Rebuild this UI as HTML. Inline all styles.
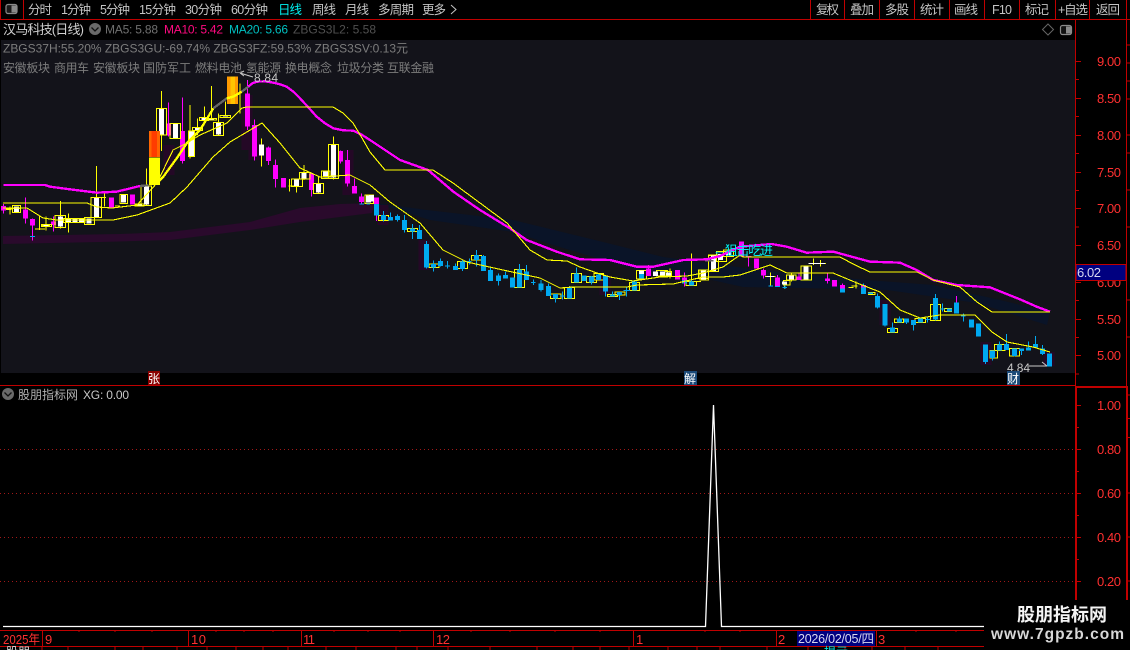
<!DOCTYPE html>
<html><head><meta charset="utf-8"><style>
html,body{margin:0;padding:0;background:#000;width:1130px;height:650px;overflow:hidden}
svg{display:block}
text{font-family:"Liberation Sans","WenQuanYi Zen Hei","Noto Sans CJK SC",sans-serif;font-size:12px}
.t{fill:#c4c4c4;font-size:12.5px}
.g{fill:#7c7c7c}
.a{fill:#ff3030;font-size:13px}
.d{fill:#ff3030;font-size:13px}
</style></head><body>
<svg width="1130" height="650" viewBox="0 0 1130 650" xmlns="http://www.w3.org/2000/svg">
<rect width="1130" height="650" fill="#000"/>
<rect x="1" y="40" width="1074" height="333" fill="#13131a"/>

<!-- bands -->
<path d="M3 236 L120 234 L170 232 L250 222 L300 208 L340 204 L375 203 L372 213 L340 217 L300 222 L250 230 L170 240 L100 242 L3 244Z" fill="#2a0a2c"/>
<path d="M375 203 L427 210 L513 220 L603 242 L663 257 L760 270 L867 280 L933 285 L1000 300 L1050 312 L1047 325 L977 303 L887 290 L800 288 L743 287 L703 278 L637 270 L553 245 L513 232 L430 220Z" fill="#0a1428"/>
<!-- halos -->
<path d="M247 95V150 M254 125V160 M348 150V195 M169 145V175 M424 240V270 M383 205V225 M1049 352V366 M986 342V365 M885 300V325 M605 275V295" stroke="#240826" stroke-width="11" fill="none"/>

<!-- GROUP Z3 -->
<g transform="scale(.33333) translate(0,240)" fill="none" shape-rendering="crispEdges">
<path stroke="#ff0" stroke-width="3" d="M30 380V403M118 410V450M138 410V452M182 363V445M205 400V458M290 258V413M313 335V380M440 265V378M484 33V213M570 75V235M592 115V165M613 80V125M634 18V120M655 100V166M677 65V110M720 10V100M784 175V260M868 297V335M890 295V338M912 255V300M955 290V340M1000 170V298M10 386H60M105 447H135M125 437H150M300 352H318M345 378H360M865 318H885M12 388H35"/>
<path stroke="#f0f" stroke-width="3" d="M10 372V400M76 352V430M97 415V482M160 410V455M506 68V170M548 52V250M742 0V150M763 118V242M805 200V255M826 238V323M934 278V350M1021 212V250M1042 210V320M1063 295V340M1085 340V370"/>
<path stroke="#f0f" stroke-width="15" d="M10 378V392M76 388V416M97 417V437M160 425V435M334 352V382M397 343V373M506 130V167M548 153V243M742 40V140M763 135V230M805 203V243M826 255V297M850 294V323M934 280V330M1021 213V245M1042 240V310M1063 318V340M1085 350V366"/>
<path stroke="#ff0" stroke-width="3" d="M38 377H62V398H38ZM125 433H155V440H125ZM165 407H197V442H165ZM190 415H220V428H190ZM205 415H240V428H205ZM225 415H255V428H225ZM253 413H283V433H253ZM273 352H305V413H273ZM360 343H382V370H360ZM405 372H432V378H405ZM423 318H455V376H423ZM470 85H500V165H470ZM510 130H542V176H510ZM565 153H583V230H565ZM578 142H608V152H578ZM598 112H625V122H598ZM620 115H650V120H620ZM640 127H670V166H640ZM660 106H692V112H660ZM875 297H908V320H875ZM898 277H930V297H898ZM940 310H970V340H940ZM965 273H990V295H965ZM985 193H1015V295H985ZM1095 345H1120V370H1095Z"/>
<path stroke="#fff" stroke-width="15" d="M50 380V396M138 435V438M182 410V440M205 417V426M225 417V426M245 417V426M267 415V431M290 354V411M371 345V368M418 374V377M440 320V374M484 87V163M527 132V174M574 155V228M592 144V150M612 114V120M635 117V119M655 129V164M677 108V110M784 194V226M890 299V318M912 279V295M955 312V338M976 275V293M1000 195V293M1105 347V368"/>
<path stroke="#ff0" stroke-width="33" d="M463 232V315"/>
<path stroke="#f60" stroke-width="33" d="M463 153V231"/>
<path stroke="#ff3c00" stroke-width="17" d="M463 153V231"/>
<path stroke="#ff9a00" stroke-width="33" d="M698 -10V72"/>
<path stroke="#ffc400" stroke-width="13" d="M698 -10V72"/>
<path stroke="#00a8f0" stroke-width="3" d="M90 469H105M1078 372H1092M1100 372H1110"/>
</g>

<!-- GROUP Z4 -->
<g transform="scale(.33333) translate(1110,510)" fill="none" shape-rendering="crispEdges">
<path stroke="#ff0" stroke-width="3" d="M965 250V335M25 137H55V152H25ZM113 175H143V185H113ZM177 282H207V293H177ZM262 275H292V295H262ZM305 257H335V270H305ZM433 298H463V353H433ZM541 372H573V385H541ZM583 352H613V385H583ZM604 310H634V338H604ZM649 320H680V338H649ZM672 310H700V330H672ZM712 373H742V380H712ZM735 366H765V375H735ZM778 337H808V362H778ZM800 302H830V327H800ZM860 302H893V318H860ZM885 305H905V318H885ZM948 335H980V347H948ZM985 300H1015V325H985ZM1015 257H1045V305H1015ZM970 335H993M900 295V325"/>
<path stroke="#00a8f0" stroke-width="3" d="M40 123V155M62 127V152M83 133V155M104 135V188M127 162V207M148 165V207M170 213V295M190 272V305M212 265V290M233 273V295M225 288H240M256 280V300M277 270V303M298 265V283M290 274H305M320 240V290M341 255V303M362 290V333M385 310V347M406 305V325M448 282V353M470 285V330M490 328V345M483 338H497M513 330V365M535 340V378M556 372V398M577 365V388M570 378H585M598 348V385M619 292V338M642 316V333M664 318V343M685 310V330M706 318V380M727 365V380M748 366V390M770 350V380M760 362H780M793 330V362M814 312V325M965 330V347"/>
<path stroke="#00a8f0" stroke-width="15" d="M20 102V137M40 135V150M62 141V152M83 138V150M104 150V180M127 175V185M148 180V207M170 222V293M190 282V293M212 273V288M256 288V300M277 275V297M320 255V270M341 258V303M362 300V333M385 316V333M406 315V325M427 323V353M448 298V353M470 305V330M513 340V360M535 348V378M556 372V385M598 352V385M619 310V338M642 316V333M664 320V338M685 313V330M706 318V365M727 373V380M748 366V375M793 335V362M814 312V325M943 330V340M965 335V347"/>
<path stroke="#f0f" stroke-width="15" d="M20 82V102M835 296V318M922 300V328M943 322V330"/>
<path stroke="#f0f" stroke-width="3" d="M20 137V153M835 285V318M943 308V350"/>
<path stroke="#fff" stroke-width="15" d="M5 75V95M814 302V312M857 305V318M878 304V316M895 307V316M1000 302V323M1030 259V303"/>
<path stroke="#666" stroke-width="5" d="M1005 272H1030"/>
</g>

<!-- GROUP Z5 -->
<g transform="scale(.33333) translate(2100,690)" fill="none" shape-rendering="crispEdges">
<path stroke="#ff0" stroke-width="3" d="M0 120H25V150H0ZM25 75H55V125H25ZM50 65H80V95H50ZM70 60H100V80H70ZM195 140H227M211 128V168M250 152H270V165H250ZM254 165V175M260 135H288V150H260ZM275 130V155M303 108H335V150H303ZM325 100H355M340 85V105M345 100H378M361 90V110M445 172H460M455 168H472M468 155V175M505 188H525V193H505ZM562 295H592V308H562ZM583 267H610V278H583ZM645 265H677V278H645ZM691 223H721V272H691ZM733 235H755V245H733ZM870 362H893V384H870ZM883 343H915V362H883ZM928 355H958V378H928Z"/>
<path stroke="#fff" stroke-width="15" d="M10 122V148M40 77V123M62 72V90M85 65V75M254 154V163M275 137V148M318 110V148M340 100V102M361 99V101"/>
<path stroke="#fff" stroke-width="3" d="M200 140H222M325 100H375"/>
<path stroke="#666" stroke-width="5" d="M15 92H40"/>
<path stroke="#f0f" stroke-width="15" d="M125 35V80M170 85V115M190 120V137M232 143V170M297 140V150M382 145V153M403 150V170M427 165V175M490 165V172"/>
<path stroke="#f0f" stroke-width="3" d="M146 80V110M138 80H154M190 115V145M232 135V170M297 130V150M382 130V160M427 160V175M769 198V217"/>
<path stroke="#00a8f0" stroke-width="15" d="M427 175V188M490 172V192M512 188V192M532 198V232M555 222V287M577 293V308M598 265V278M620 265V278M640 270V285M662 265V278M706 204V268M748 235V245M769 217V250M815 268V293M835 280V320M856 343V396M878 362V384M898 343V362M919 342V360M943 355V378M965 355V363M985 352V362M1006 342V353M1027 355V372M1048 370V410"/>
<path stroke="#00a8f0" stroke-width="3" d="M490 160V192M532 190V235M555 222V290M577 278V308M598 260V278M620 265V282M640 270V302M683 260V278M677 268H691M706 192V272M727 220V245M720 237H735M769 217V250M790 250V275M783 258H797M815 268V293M856 343V402M878 362V392M898 335V362M919 312V360M943 355V380M965 355V375M985 335V362M1006 318V353M1027 345V375M205 168H219M225 170H240M247 172H261M255 165V177"/>
</g>

<!-- MA lines -->
<g fill="none" stroke-linejoin="round" shape-rendering="crispEdges">
<g transform="scale(.33333)">
<path stroke="#f0f" stroke-width="7" d="M10 555H135L150 560L210 568L290 578L350 575L420 558"/>
<path stroke="#666" stroke-width="7" d="M420 558L445 556M640 325L680 295M725 275L745 260"/>
<path stroke="#ff0" stroke-width="7" d="M470 550L490 530L530 475L560 430L600 390L640 325M680 295L700 290L725 275"/>
<path stroke="#f0f" stroke-width="7" d="M745 260L757 250L770 245L795 244L820 248L840 253L860 260L880 275L900 295L925 322L950 350L975 370L1000 385L1030 391L1060 392L1085 404L1110 420L1155 450L1200 480L1284 510L1360 575L1440 630L1530 685L1580 720L1670 755L1740 778L1830 780L1910 800L1960 800L2050 780L2120 778L2160 768L2220 740L2315 732L2360 740L2420 758L2500 755L2610 785L2700 788L2750 810L2800 840L2870 855L2970 862L3060 898L3110 920L3150 935"/>
</g>
<g stroke="#ff0" stroke-width="1.1">
<path d="M3 203H87L97 207L112 208L137 205L157 183L173 150L187 143L200 135L227 123L242 108L247 107H333L343 113L353 123L362 138L370 152L385 170H433L453 183L480 203L507 223L530 250L547 260L567 261L580 267L597 273L610 277L633 281L660 277L687 276L703 273L723 267L740 255L743 257H840L855 265L870 272H917L933 280L960 287L977 302L992 312H1050"/>
<path d="M3 208H27L43 218L57 220H113L137 215L170 203L187 187L213 157L230 142L262 123L280 143L300 168L320 177L350 175L370 185L390 202L420 223L443 250L467 262L503 270L540 278L560 288L573 287H627L637 285L673 284L703 277L723 277L740 275L770 265L787 273L800 273H833L857 283L880 292L900 310L920 318L940 315H975L992 332L1007 342L1033 347L1050 352"/>
</g>
</g>

<!-- labels on chart -->
<path d="M240 73L253 77M240 73L244 71M240 73L244 76" stroke="#c8c8c8" fill="none"/>
<text x="254" y="82" fill="#c8c8c8" textLength="24">8.84</text>
<text x="713" y="255" fill="#00f0f0" style="font-size:13px" textLength="60">←狙击吃进</text>
<text x="1007" y="372" fill="#c8c8c8" textLength="23">4.84</text>
<path d="M1029 366H1047M1042 362L1047 366" stroke="#c8c8c8" fill="none"/>

<!-- black strip & badges -->
<rect x="148" y="371" width="12" height="14" fill="#8a0000"/>
<text x="148" y="383" fill="#fff" textLength="12">张</text>
<rect x="684" y="371" width="13" height="14" fill="#1b4a78"/>
<text x="684" y="383" fill="#fff" textLength="12">解</text>
<rect x="1007" y="371" width="13" height="14" fill="#1b4a78"/>
<text x="1007" y="383" fill="#fff" textLength="12">财</text>

<!-- toolbar -->
<path d="M0 19.5H1130M0.5 0V19M23.5 0V19M810.5 0V19M844.5 0V19M879.5 0V19M914.5 0V19M949.5 0V19M984.5 0V19M1019.5 0V19M1055.5 0V19M1089.5 0V19M1126.5 0V19" stroke="#c00000" fill="none"/>
<rect x="6" y="4.5" width="11" height="9" rx="2" fill="#1a1a1a" stroke="#8a8a8a" stroke-width="1.2"/><rect x="11.5" y="5.5" width="5" height="7" fill="#8a8a8a"/>
<g>
<text class="t" x="28" y="14" textLength="24">分时</text>
<text class="t" x="61" y="14" textLength="30">1分钟</text>
<text class="t" x="100" y="14" textLength="30">5分钟</text>
<text class="t" x="139" y="14" textLength="37">15分钟</text>
<text class="t" x="185" y="14" textLength="37">30分钟</text>
<text class="t" x="231" y="14" textLength="37">60分钟</text>
<text x="278" y="14" style="fill:#00f0f0;font-size:12.5px" textLength="24">日线</text>
<text class="t" x="312" y="14" textLength="24">周线</text>
<text class="t" x="345" y="14" textLength="24">月线</text>
<text class="t" x="378" y="14" textLength="36">多周期</text>
<text class="t" x="422" y="14" textLength="24">更多</text>
<path d="M451 5L456 9.5L451 14" stroke="#c4c4c4" fill="none"/>
<text class="t" x="816" y="14" textLength="23">复权</text>
<text class="t" x="850" y="14" textLength="24">叠加</text>
<text class="t" x="885" y="14" textLength="24">多股</text>
<text class="t" x="920" y="14" textLength="24">统计</text>
<text class="t" x="954" y="14" textLength="24">画线</text>
<text class="t" x="992" y="14" textLength="20">F10</text>
<text class="t" x="1025" y="14" textLength="24">标记</text>
<text class="t" x="1058" y="14" textLength="30">+自选</text>
<text class="t" x="1096" y="14" textLength="24">返回</text>
</g>

<!-- row 2 -->
<text x="3" y="34" fill="#d0d0d0" style="font-size:13px" textLength="81">汉马科技(日线)</text>
<circle cx="95" cy="29" r="6" fill="#6a6a6a"/><path d="M91.5 27.5L95 31L98.5 27.5" stroke="#111" stroke-width="1.3" fill="none"/>
<text x="105" y="33.5" fill="#707070" textLength="53">MA5: 5.88</text>
<text x="164" y="33.5" fill="#ff0a80" textLength="59">MA10: 5.42</text>
<text x="229" y="33.5" fill="#00c0c0" textLength="59">MA20: 5.66</text>
<text x="293" y="33.5" fill="#505050" textLength="83">ZBGS3L2: 5.58</text>
<path d="M1048 24L1053.5 29.5L1048 35L1042.5 29.5Z" stroke="#666" fill="none"/>
<rect x="1060.5" y="25.5" width="11" height="9" rx="2" fill="#111" stroke="#8a8a8a" stroke-width="1.2"/><rect x="1066" y="26.5" width="5" height="7" fill="#8a8a8a"/>

<!-- row 3,4 -->
<text class="g" x="3" y="52.5" textLength="405">ZBGS37H:55.20% ZBGS3GU:-69.74% ZBGS3FZ:59.53% ZBGS3SV:0.13元</text>
<text class="g" x="3" y="72" textLength="47">安徽板块</text>
<text class="g" x="54" y="72" textLength="35">商用车</text>
<text class="g" x="93" y="72" textLength="47">安徽板块</text>
<text class="g" x="143" y="72" textLength="48">国防军工</text>
<text class="g" x="195" y="72" textLength="47">燃料电池</text>
<text class="g" x="246" y="72" textLength="35">氢能源</text>
<text class="g" x="285" y="72" textLength="47">换电概念</text>
<text class="g" x="337" y="72" textLength="47">垃圾分类</text>
<text class="g" x="387" y="72" textLength="47">互联金融</text>

<!-- axis frames -->
<path d="M1075.5 19V386M1126.5 19V386M0 385.5H1076" stroke="#c00000" fill="none"/>
<path d="M1076 387H1127M1076 386V600M1127 386V600" stroke="#c00000" stroke-width="2" fill="none"/>
<path d="M1076 61.5H1081M1076 98.5H1081M1076 135.5H1081M1076 172.5H1081M1076 208.5H1081M1076 245.5H1081M1076 282.5H1081M1076 319.5H1081M1076 355.5H1081M1076 79.5H1079M1076 116.5H1079M1076 153.5H1079M1076 190.5H1079M1076 227H1079M1076 300.5H1079M1076 337.5H1079M1076 374H1079M1127 45H1130M1127 63H1130M1127 81H1130M1127 99H1130M1127 135H1130M1127 153H1130M1127 190H1130M1127 227H1130M1127 300H1130M1127 337H1130M1076 405.5H1081M1076 449.5H1081M1076 493.5H1081M1076 537.5H1081M1076 581.5H1081M1076 427.5H1079M1076 471.5H1079M1076 515.5H1079M1076 559.5H1079M1128 418.5H1130M1128 437.5H1130M1127 395H1130M1127 493H1130M1127 537H1130M1127 581H1130" stroke="#c00000" fill="none"/>
<text class="a" x="1097" y="66" textLength="24">9.00</text>
<text class="a" x="1097" y="103" textLength="24">8.50</text>
<text class="a" x="1097" y="140" textLength="24">8.00</text>
<text class="a" x="1097" y="177" textLength="24">7.50</text>
<text class="a" x="1097" y="213" textLength="24">7.00</text>
<text class="a" x="1097" y="250" textLength="24">6.50</text>
<text class="a" x="1097" y="287" textLength="24">6.00</text>
<text class="a" x="1097" y="324" textLength="24">5.50</text>
<text class="a" x="1097" y="360" textLength="24">5.00</text>
<rect x="1076" y="264.5" width="50" height="16" fill="#000080" stroke="#c00000"/>
<text x="1077" y="277" fill="#d8d8f0" style="font-size:13px" textLength="24">6.02</text>

<!-- lower panel -->
<circle cx="8" cy="394" r="6" fill="#6a6a6a"/><path d="M4.5 392.5L8 396L11.5 392.5" stroke="#111" stroke-width="1.3" fill="none"/>
<text x="18" y="399" fill="#b0b0b0" textLength="60">股朋指标网</text>
<text x="83" y="399" fill="#c8c8c8" textLength="46">XG: 0.00</text>
<path d="M0 449.5H1075M0 493.5H1075M0 537.5H1075M0 581.5H1075" stroke="#a01818" stroke-dasharray="1 3" fill="none"/>
<text class="a" x="1097" y="410" textLength="24">1.00</text>
<text class="a" x="1097" y="454" textLength="24">0.80</text>
<text class="a" x="1097" y="498" textLength="24">0.60</text>
<text class="a" x="1097" y="542" textLength="24">0.40</text>
<text class="a" x="1097" y="586" textLength="24">0.20</text>
<path d="M3 626.5H705.5L713.5 405L721.5 626.5H985" stroke="#fff" stroke-width="1.3" fill="none"/>

<!-- date row -->
<path d="M0 630.5H985M0 646.5H985M42.5 630V646M188.5 630V646M301.5 630V646M433.5 630V646M633.5 630V646M776.5 630V646M876.5 630V646M79 630V632M115 630V632M152 630V632M216 630V632M244 630V632M273 630V632M334 630V632M368 630V632M400 630V632M471 630V632M510 630V632M555 630V632M600 630V632M705 630V632M740 630V632M916 630V632M956 630V632" stroke="#c00000" fill="none"/>
<path d="M42 647V650M68 647V650M115 647V650M143 647V650M177 647V650M207 647V650M236 647V650M263 647V650M288 647V650M326 647V650M356 647V650M396 647V650M417 647V650M448 647V650M490 647V650M537 647V650M573 647V650M600 647V650M629 647V650M668 647V650M697 647V650M720 647V650M767 647V650M808 647V650M845 647V650M872 647V650M905 647V650M938 647V650" stroke="#c00000" fill="none"/>
<text class="d" x="3" y="644" textLength="37" lengthAdjust="spacingAndGlyphs">2025年</text>
<text class="d" x="45" y="644">9</text>
<text class="d" x="191" y="644" textLength="15">10</text>
<text class="d" x="303" y="644" textLength="12">11</text>
<text class="d" x="436" y="644" textLength="14">12</text>
<text class="d" x="636" y="644">1</text>
<text class="d" x="778" y="644">2</text>
<rect x="797" y="631" width="78" height="15" fill="#000080"/>
<text x="798" y="643" fill="#d8d8f0" style="font-size:12.5px" textLength="76">2026/02/05/四</text>
<text class="d" x="878" y="644">3</text>
<text x="6" y="656" fill="#ddd" style="font-size:12px" textLength="24">股朋</text>
<text x="824" y="656" fill="#00e0e0" style="font-size:12px" textLength="24">提示</text>

<!-- watermark -->
<rect x="984" y="600" width="146" height="50" fill="#000"/>
<text x="1017" y="621" fill="#f4f4f4" style="font-size:18px;font-weight:bold" textLength="90">股朋指标网</text>
<text x="991" y="639" fill="#d8d8d8" style="font-size:15.5px;font-weight:bold" textLength="133">www.7gpzb.com</text>
</svg>
</body></html>
